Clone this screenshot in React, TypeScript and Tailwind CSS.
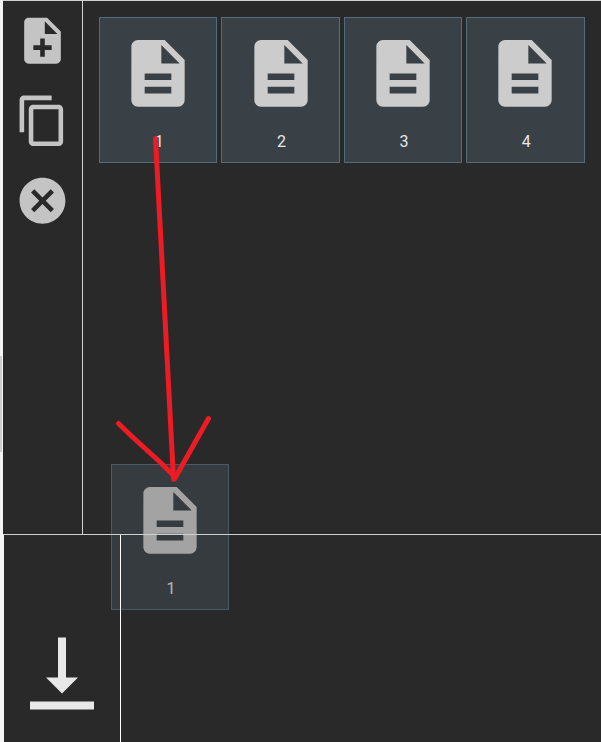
const FILE =
  'M14 2H6c-1.1 0-1.99.9-1.99 2L4 20c0 1.1.89 2 1.99 2H18c1.1 0 2-.9 2-2V8l-6-6zm2 16H8v-2h8v2zm0-4H8v-2h8v2zm-3-5V3.5L18.5 9H13z';
const FILE_ADD =
  'M14 2H6c-1.1 0-1.99.9-1.99 2L4 20c0 1.1.89 2 1.99 2H18c1.1 0 2-.9 2-2V8l-6-6zm2 14h-3v3h-2v-3H8v-2h3v-3h2v3h3v2zm-3-7V3.5L18.5 9H13z';
const COPY =
  'M16 1H4c-1.1 0-2 .9-2 2v14h2V3h12V1zm3 4H8c-1.1 0-2 .9-2 2v14c0 1.1.9 2 2 2h11c1.1 0 2-.9 2-2V7c0-1.1-.9-2-2-2zm0 16H8V7h11v14z';
const CANCEL =
  'M12 2C6.47 2 2 6.47 2 12s4.47 10 10 10 10-4.47 10-10S17.53 2 12 2zm5 13.59L15.59 17 12 13.41 8.41 17 7 15.59 10.59 12 7 8.41 8.41 7 12 10.59 15.59 7 17 8.41 13.41 12 17 15.59z';
const TO_BOTTOM = 'M16 13h-3V3h-2v10H8l4 4 4-4zM4 19v2h16v-2H4z';

function Icon({ path, className }: { path: string; className: string }) {
  return (
    <svg viewBox="0 -0.12 24 24" fill="currentColor" className={className}>
      <path d={path} />
    </svg>
  );
}

function FileCard({ label }: { label: string }) {
  return (
    <div className="flex h-[146px] w-full flex-col items-center border border-[#536b7b] bg-[#394146] pt-[15px]">
      <Icon path={FILE} className="size-20 shrink-0 text-[#cccccc]" />
      <span className="mt-[17px] pl-0.5 text-base leading-6 text-[#e6e6e6]">{label}</span>
    </div>
  );
}

export default function App() {
  return (
    <div className="relative isolate h-[742px] w-[601px] overflow-hidden bg-[#292929] font-['Roboto',sans-serif]">
      <div className="absolute left-[111px] top-[464px] w-[118px] opacity-75">
        <FileCard label="1" />
      </div>

      <div className="relative z-10 flex h-full flex-col">
        <div className="flex h-[535px]">
          <div className="flex w-[3px] shrink-0 flex-col bg-[#f3f3f3] pt-[356px]">
            <div className="h-24 w-[2px] bg-[#cdcdcd]" />
          </div>
          <div className="flex flex-1 border-y border-[#cdd1cf]">
            <aside className="flex w-20 shrink-0 flex-col gap-[25px] border-r border-[#d3d3d3] pl-3 pt-3 text-[#c4c4c4]">
              <Icon path={FILE_ADD} className="size-[55px]" />
              <Icon path={COPY} className="size-[55px]" />
              <Icon path={CANCEL} className="size-[55px]" />
            </aside>
            <main className="grid h-fit w-[501.55px] grid-cols-4 gap-x-1 pl-[15.95px] pt-4">
              <FileCard label="1" />
              <FileCard label="2" />
              <FileCard label="3" />
              <FileCard label="4" />
            </main>
          </div>
        </div>
        <div className="flex flex-1">
          <div className="w-1 shrink-0 bg-[#f3f5f6]" />
          <div className="w-[117px] shrink-0 border-r border-white pl-[10px] pt-[90px] text-[#e8e8e8]">
            <Icon path={TO_BOTTOM} className="size-24" />
          </div>
          <div className="flex-1" />
        </div>
      </div>

      <svg
        viewBox="0 0 601 742"
        className="pointer-events-none absolute inset-0 z-20 h-full w-full"
        fill="none"
        stroke="#ed1c24"
        strokeWidth="5"
        strokeLinecap="round"
        strokeLinejoin="round"
      >
        <path d="M155.5 138.5L173.5 479" />
        <path d="M118.5 423.5L132 436.5L161 463L174 476" />
        <path d="M208.5 418.5L174.5 479" />
      </svg>
    </div>
  );
}
